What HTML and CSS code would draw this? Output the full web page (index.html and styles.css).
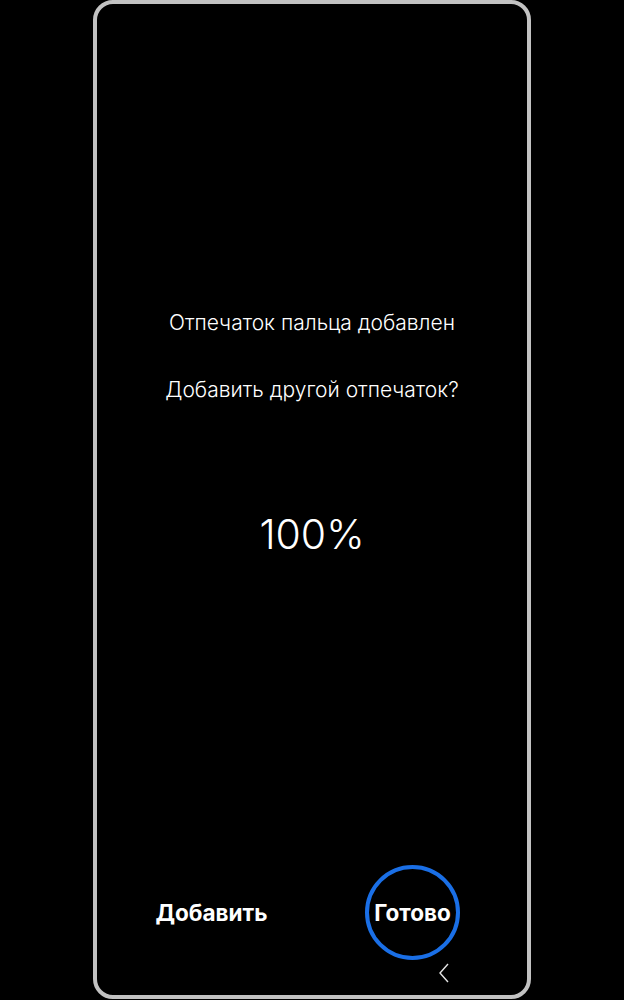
FILE: index.html
```
<!DOCTYPE html>
<html lang="ru">
<head>
    <meta charset="UTF-8">
    <meta name="viewport" content="width=device-width, initial-scale=1.0">
    <title>Отпечаток пальца добавлен</title>
    <link rel="stylesheet" href="styles.css">
</head>
<body>
    <div class="phone">
        <div class="screen">
            <div class="message">
                <p class="title">Отпечаток пальца добавлен</p>
                <p class="question">Добавить другой отпечаток?</p>
            </div>

            <div class="progress">100%</div>

            <div class="actions">
                <button class="action">Добавить</button>
                <button class="action action-done">Готово</button>
            </div>

            <div class="navbar">
                <svg class="nav-back" width="12" height="20" viewBox="0 0 12 20">
                    <polyline points="10,1 2,10 10,19" fill="none" stroke="#e6e6e6" stroke-width="1.4"/>
                </svg>
            </div>
        </div>
    </div>
</body>
</html>
```

FILE: styles.css
```
body {
    margin: 0;
    background: #000;
    font-family: Inter, "Noto Sans", sans-serif;
    color: #fff;
}

.phone {
    width: 438px;
    height: 999px;
    margin: 0 auto;
    box-sizing: border-box;
    border: 4px solid #c2c2c2;
    border-radius: 20px;
    background: #000;
}

.screen {
    height: 100%;
    display: flex;
    flex-direction: column;
}

.message {
    padding-top: 304px;
    text-align: center;
}

.message p {
    margin: 0;
    font-size: 21px;
    font-weight: 300;
    line-height: 30px;
}

.message .question {
    margin-top: 37px;
}

.progress {
    margin-top: 104px;
    text-align: center;
    font-size: 41px;
    font-weight: 300;
    line-height: 50px;
}

.actions {
    margin-top: auto;
    display: grid;
    grid-template-columns: 1fr 1fr;
    padding: 0 14px;
}

.action {
    justify-self: center;
    width: 95px;
    height: 95px;
    padding: 0;
    border: 4px solid transparent;
    border-radius: 50%;
    background: none;
    color: #fff;
    font-family: inherit;
    font-size: 22.5px;
    font-weight: 700;
    white-space: nowrap;
    display: flex;
    align-items: center;
    justify-content: center;
}

.action-done {
    border-color: #1a6fe6;
}

.navbar {
    height: 35px;
    box-sizing: border-box;
    display: flex;
    justify-content: flex-end;
    align-items: flex-start;
    padding: 3px 77px 0 0;
}
```
